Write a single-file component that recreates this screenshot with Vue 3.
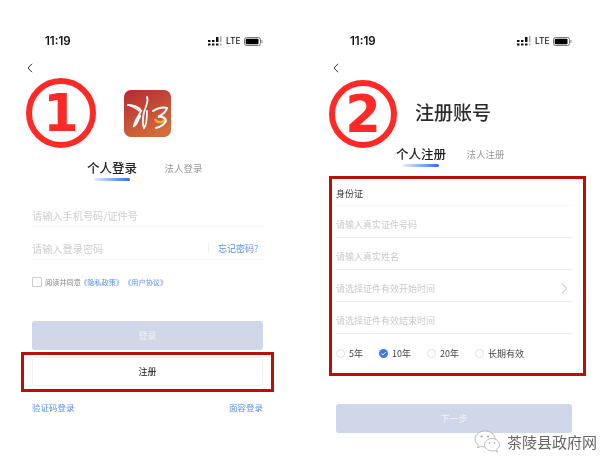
<template>
  <div class="page">
    <section class="phone phone-login">
      <div class="status">
        <span class="time">11:19</span>
        <div class="status-right">
          <svg class="signal" width="14" height="10" viewBox="0 0 14 10">
            <path d="M0 4h2.500v2H0zM0 7.500h2.500v2H0zM4 4h2.500v2H4zM4 7.500h2.500v2H4zM8 1h2.500v5H8zM8 7.500h2.500v2H8z" fill="#111" />
            <path d="M12 0h1.500v6H12zM12 7.500h1.500v2H12z" fill="#aaa" />
          </svg>
          <span class="lte">LTE</span>
          <svg class="battery" width="19" height="9" viewBox="0 0 19 9">
            <rect x="0.5" y="0.5" width="16" height="8" rx="2" fill="none" stroke="#777" />
            <rect x="1.7" y="1.7" width="12.8" height="5.6" rx="1" fill="#000" />
            <path d="M18 3v3" stroke="#888" />
          </svg>
        </div>
      </div>
      <svg class="back" width="6" height="10" viewBox="0 0 6 10">
        <path d="M5 .8 1 5l4 4.200" fill="none" stroke="#333" stroke-width="1" />
      </svg>

      <div class="head head-login">
        <div class="step step-one">1</div>
        <svg class="logo" width="47" height="47" viewBox="0 0 47 47">
          <defs>
            <linearGradient id="logoBg" x1="0.1" y1="0" x2="0.6" y2="1">
              <stop offset="0" stop-color="#b62c34" />
              <stop offset="1" stop-color="#d26c3a" />
            </linearGradient>
          </defs>
          <rect width="47" height="47" rx="7" fill="url(#logoBg)" />
          <path d="M31 29c2 4 7 4 10 1" fill="none" stroke="#eeb03c" stroke-width="2.500" />
          <g fill="none" stroke="#fff" stroke-linecap="round">
            <path d="M4 15c5 0 11 2 13 6-2 5-6 9-7 15 3-1 4-6 6-10" stroke-width="2" />
            <path d="M5 15c3 2 7 3 10 6" stroke-width="1.200" />
            <path d="M23 7c2 4-1 9-3 15-1 5-2 12 0 16 3-3 3-11 3-17" stroke-width="1.800" />
            <path d="M29 21c5-3 10-4 14-3-1 4-5 7-9 9 4-1 8 1 8 4-2 4-6 6-10 7" stroke-width="2" />
          </g>
        </svg>
      </div>

      <div class="tabs tabs-login">
        <div class="tab-active">
          <span>个人登录</span>
          <i class="tab-line"></i>
        </div>
        <span class="tab-other">法人登录</span>
      </div>

      <div class="input input-first">请输入手机号码/证件号</div>
      <div class="input input-second">
        <span>请输入登录密码</span>
        <span class="forgot">忘记密码?</span>
      </div>

      <div class="agree">
        <i class="checkbox"></i>
        <span>阅读并同意</span>
        <span class="link">《隐私政策》</span>
        <span class="link">《用户协议》</span>
      </div>

      <button class="btn btn-primary login-btn">登录</button>
      <div class="mark mark-register">
        <button class="btn btn-plain">注册</button>
      </div>

      <div class="alt-links">
        <span>验证码登录</span>
        <span>面容登录</span>
      </div>
    </section>

    <section class="phone phone-register">
      <div class="status">
        <span class="time">11:19</span>
        <div class="status-right">
          <svg class="signal" width="14" height="10" viewBox="0 0 14 10">
            <path d="M0 4h2.500v2H0zM0 7.500h2.500v2H0zM4 4h2.500v2H4zM4 7.500h2.500v2H4zM8 1h2.500v5H8zM8 7.500h2.500v2H8z" fill="#111" />
            <path d="M12 0h1.500v6H12zM12 7.500h1.500v2H12z" fill="#aaa" />
          </svg>
          <span class="lte">LTE</span>
          <svg class="battery" width="19" height="9" viewBox="0 0 19 9">
            <rect x="0.5" y="0.5" width="16" height="8" rx="2" fill="none" stroke="#777" />
            <rect x="1.7" y="1.7" width="12.8" height="5.6" rx="1" fill="#000" />
            <path d="M18 3v3" stroke="#888" />
          </svg>
        </div>
      </div>
      <svg class="back" width="6" height="10" viewBox="0 0 6 10">
        <path d="M5 .8 1 5l4 4.200" fill="none" stroke="#333" stroke-width="1" />
      </svg>

      <div class="head head-register">
        <div class="step step-two">2</div>
        <h1 class="title">注册账号</h1>
      </div>

      <div class="tabs tabs-register">
        <div class="tab-active">
          <span>个人注册</span>
          <i class="tab-line"></i>
        </div>
        <span class="tab-other">法人注册</span>
      </div>

      <div class="mark mark-form">
        <div class="row row-first">身份证</div>
        <div class="row placeholder">请输入真实证件号码</div>
        <div class="row placeholder">请输入真实姓名</div>
        <div class="row placeholder">
          <span>请选择证件有效开始时间</span>
          <svg class="arrow" width="7" height="11" viewBox="0 0 7 11">
            <path d="m1 .7 5 4.800-5 4.800" fill="none" stroke="#b9bdd0" stroke-width="1" />
          </svg>
        </div>
        <div class="row placeholder">请选择证件有效结束时间</div>
        <div class="terms">
          <div v-for="term in terms" :key="term.label" class="term">
            <i class="radio" :class="{ 'radio-on': term.active }">
              <svg v-if="term.active" width="9" height="9" viewBox="0 0 9 9">
                <path d="M2.400 4.600 3.900 6l2.700-2.800" fill="none" stroke="#fff" stroke-width="1" />
              </svg>
            </i>
            <span>{{ term.label }}</span>
          </div>
        </div>
      </div>

      <button class="btn btn-primary next-btn">下一步</button>
    </section>

    <div class="watermark">
      <svg width="27" height="23" viewBox="0 0 27 23">
        <g fill="#fff" stroke="#a8a8a8" stroke-width="0.8">
          <path d="M11 1C5.500 1 1 4.600 1 9c0 2.400 1.300 4.500 3.400 6L3.500 18l3.300-1.700c1.300.4 2.700.6 4.200.6 5.500 0 10-3.500 10-7.900S16.500 1 11 1z" />
          <path d="M18 8.500c-4.300 0-7.500 2.800-7.500 6.200s3.200 6.200 7.500 6.200c.9 0 1.800-.1 2.600-.4l2.800 1.500-.8-2.600c1.700-1.200 2.900-2.900 2.900-4.700 0-3.400-3.200-6.200-7.500-6.200z" />
        </g>
        <circle cx="7.500" cy="6.500" r="1" fill="#999" />
        <circle cx="14" cy="6.500" r="1" fill="#999" />
        <circle cx="15.500" cy="13" r=".8" fill="#999" />
        <circle cx="20.500" cy="13" r=".8" fill="#999" />
      </svg>
      <span>茶陵县政府网</span>
    </div>
  </div>
</template>

<script setup>
const terms = [
  { label: '5年', active: false },
  { label: '10年', active: true },
  { label: '20年', active: false },
  { label: '长期有效', active: false }
]
</script>

<style scoped>
.page {
  position: relative;
  display: flex;
  width: 616px;
  height: 469px;
  overflow: hidden;
  background: #fff;
  color: #222;
  font-family: 'Noto Sans CJK SC', 'Liberation Sans', sans-serif;
  filter: blur(0.35px);
}

.phone {
  box-sizing: border-box;
  display: flex;
  flex-direction: column;
  width: 308px;
  padding-top: 33px;
}

.phone-login {
  padding-left: 32px;
  padding-right: 45px;
}

.phone-register {
  padding-left: 28px;
  padding-right: 44px;
}

.status {
  display: flex;
  justify-content: space-between;
  align-items: center;
  height: 16px;
}

.time {
  margin-left: 13px;
  font-family: 'Inter', sans-serif;
  font-size: 11.500px;
  font-weight: 600;
  color: #111;
}

.phone-register .time {
  margin-left: 14px;
}

.status-right {
  display: flex;
  align-items: center;
}

.signal {
  margin-right: 4px;
}

.lte {
  width: 14px;
  margin-right: 4px;
  font-family: 'Inter', sans-serif;
  font-size: 8.500px;
  font-weight: 500;
  color: #222;
}

.back {
  display: block;
  flex: none;
  margin: 14px 0 0 -5px;
}

.phone-register .back {
  margin-left: -3px;
}

.head {
  display: flex;
  align-items: center;
}

.head-login {
  height: 70px;
  margin: 5px 0 0 -6px;
}

.head-register {
  height: 68px;
  margin: 7px 0 0 -7px;
}

.step {
  box-sizing: border-box;
  flex: none;
  display: flex;
  justify-content: center;
  align-items: center;
  border-style: solid;
  border-color: #ff2a25;
  border-radius: 50%;
  font-family: 'DejaVu Sans', sans-serif;
  font-weight: 700;
  font-size: 51px;
  line-height: 1;
  color: #ff2a25;
}

.step-one {
  width: 70px;
  height: 70px;
  border-width: 6px;
}

.step-two {
  width: 68px;
  height: 68px;
  border-width: 6px;
}

.logo {
  flex: none;
  margin-left: 28px;
}

.title {
  margin: 0 0 5px 18px;
  font-size: 19px;
  font-weight: 500;
  line-height: 26px;
  color: #2b2b2b;
}

.tabs {
  display: flex;
  align-items: flex-start;
  height: 23px;
}

.tabs-login {
  margin: 10px 0 0 54.500px;
  gap: 27px;
}

.tabs-register {
  margin: -4px 0 0 59.500px;
  gap: 20px;
}

.tab-active {
  display: flex;
  flex-direction: column;
  align-items: center;
  width: 51px;
  font-size: 12.500px;
  font-weight: 500;
  line-height: 20px;
  color: #222;
}

.tab-line {
  display: block;
  width: 36px;
  height: 3px;
  border-radius: 2px;
  background: linear-gradient(90deg, #e6eefc, #2f6bf0);
}

.tab-other {
  font-size: 9.500px;
  line-height: 20px;
  color: #999;
}

.input {
  box-sizing: border-box;
  display: flex;
  flex: none;
  justify-content: space-between;
  align-items: center;
  border-bottom: 1px solid #f6f6f6;
  font-size: 10.200px;
  color: #cdcdcd;
}

.input-first {
  height: 22px;
  margin-top: 24px;
}

.input-second {
  height: 23px;
  margin-top: 10px;
}

.forgot {
  box-sizing: border-box;
  width: 55px;
  padding-left: 9px;
  border-left: 1px solid #f2f2f2;
  font-size: 9px;
  line-height: 11px;
  color: #5b8ff2;
}

.agree {
  display: flex;
  align-items: center;
  height: 10px;
  margin-top: 17px;
  font-size: 7.200px;
  color: #888;
}

.checkbox {
  box-sizing: border-box;
  width: 10px;
  height: 10px;
  margin-right: 3px;
  border: 1px solid #ccc;
  border-radius: 1px;
}

.link {
  margin-left: -1px;
  color: #5b8ff2;
}

.link + .link {
  margin-left: 1px;
}

.btn {
  display: block;
  box-sizing: border-box;
  width: 100%;
  height: 29px;
  padding: 0;
  border: 0;
  border-radius: 3px;
  font-family: inherit;
  font-size: 9px;
}

.btn-primary {
  background: #cfd7e9;
  color: #f1f3f8;
}

.btn-plain {
  border: 1px solid #f1f1f1;
  background: #fff;
  color: #111;
}

.login-btn {
  flex: none;
  margin-top: 34px;
}

.mark {
  box-sizing: border-box;
  flex: none;
  border: 3px solid #b81104;
}

.mark-register {
  height: 40px;
  margin: 2px -11px 0;
  padding: 2px 8px;
}

.alt-links {
  display: flex;
  justify-content: space-between;
  margin-top: 9px;
  font-size: 8.500px;
  line-height: 12px;
  color: #5b8ff2;
}

.mark-form {
  height: 200px;
  margin: 9px -14px 0 -7px;
  padding: 0 11px 0 4px;
}

.row {
  box-sizing: border-box;
  display: flex;
  justify-content: space-between;
  align-items: center;
  height: 32px;
  padding-top: 6px;
  border-bottom: 1px solid #efefef;
  font-size: 9px;
}

.row-first {
  height: 27px;
  padding-top: 2px;
  border-bottom-color: #f7f7f7;
  color: #333;
}

.placeholder {
  color: #c9c9c9;
}

.arrow {
  margin-right: 4px;
}

.terms {
  display: flex;
  align-items: center;
  gap: 16px;
  height: 39px;
  font-size: 9px;
  color: #444;
}

.term {
  display: flex;
  align-items: center;
  gap: 4px;
}

.radio {
  box-sizing: border-box;
  display: flex;
  width: 9px;
  height: 9px;
  border: 1px solid #e2e2e2;
  border-radius: 50%;
}

.radio-on {
  border: 0;
  background: #3b78f0;
}

.next-btn {
  flex: none;
  margin-top: 28px;
}

.watermark {
  position: absolute;
  top: 430px;
  left: 474px;
  display: flex;
  align-items: center;
  gap: 6px;
  font-size: 15px;
  line-height: 23px;
  color: #666;
  text-shadow: 0 0 1px #fff, 0 0 1px #fff;
}
</style>
